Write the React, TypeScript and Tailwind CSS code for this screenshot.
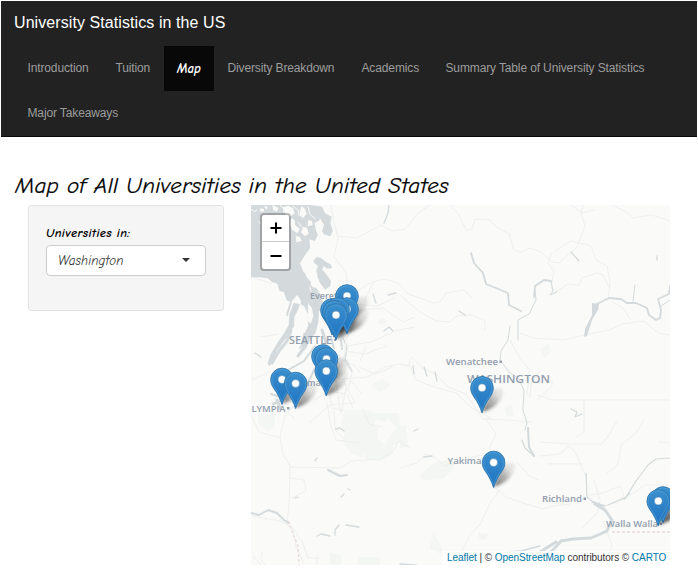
import React from "react";

const tabs = [
  { label: "Introduction", width: "w-[88px]" },
  { label: "Tuition", width: "w-[62px]" },
  { label: "Map", width: "w-[50px]", active: true },
  { label: "Diversity Breakdown", width: "w-[134px]" },
  { label: "Academics", width: "w-[84px]" },
  { label: "Summary Table of University Statistics", width: "w-[226px]" },
  { label: "Major Takeaways", width: "w-[118px]" },
];

const pins: [number, number][] = [
  [347, 296], [347, 309], [332, 310], [338, 309], [334, 312], [336, 315],
  [323, 356], [326.5, 359], [326.3, 371], [282, 379.5], [295.6, 383.5],
  [482, 387.8], [493.6, 462.5], [663, 498], [658.3, 501],
];

function Pin({ x, y }: { x: number; y: number }) {
  return (
    <g transform={`translate(${x} ${y})`}>
      <path
        d="M0 25C-1.5 20-4.8 13.5-8 9.2C-10.2 6.2-11.3 3.2-11.3 0A11.3 11.3 0 0 1 11.3 0C11.3 3.2 10.2 6.2 8 9.2C4.8 13.5 1.5 20 0 25Z"
        fill="url(#pinFill)"
        stroke="#2f77ad"
        strokeWidth=".9"
      />
      <path
        d="M0 22C-1.8 17-4.5 12.2-7.2 8.5C-9.2 5.7-10.2 3-10.2 0A10.2 10.2 0 0 1 10.2 0C10.2 3 9.2 5.7 7.2 8.5C4.5 12.2 1.8 17 0 22Z"
        fill="none"
        stroke="#5ba7dc"
        strokeOpacity=".55"
        strokeWidth=".9"
      />
      <circle r="4" fill="#fff" stroke="#2c73aa" strokeWidth=".5" />
    </g>
  );
}

function MapDrawing() {
  return (
    <svg className="block h-[360px] w-[419px]" viewBox="251 205 419 360">
      <defs>
        <linearGradient id="pinFill" x1="0" y1="0" x2="0" y2="1">
          <stop offset="0" stopColor="#3b8fcd" />
          <stop offset="1" stopColor="#1c72c2" />
        </linearGradient>
        <linearGradient id="shade" x1="0" y1="1" x2="1" y2="0">
          <stop offset="0" stopColor="#222" stopOpacity=".65" />
          <stop offset=".8" stopColor="#222" stopOpacity=".08" />
        </linearGradient>
        <filter id="soft" x="-40%" y="-40%" width="180%" height="180%">
          <feGaussianBlur stdDeviation="1.5" />
        </filter>
      </defs>
      <rect x="251" y="205" width="419" height="360" fill="#fafaf8" />

      {/* Forest and park areas */}
      <g fill="#f4f6f3">
        <path fillRule="evenodd" d="M343 414l6-4h19l6 3h25l1 12 6 1v14l-13 5v9l-12 7-15-1-1-9-2 7-12-5-9-12 3-8-4-9zM376 419l9 3 3-4 9 11-5 4-7 12-8-7 2-10-5-3z" />
        <path d="M420 475l14-12 18-4 1 10-10 10-21 1zM258 414h17v12l-8 5-9-8zM400 425l7 8 1 13-8 3zM330 552l11 3v10h-11zM358 557h22v8h-22zM540 349l8-5 4 7-8 7zM504 407l7-3 3 11-7 2z" />
        <path d="M371 385l12-6 8 6-11 7zM433 533l8 13 1 8-12-5zM478 533l10 1-2 5-6 1zM378 320l7-2 2 5-8 2z" />
      </g>

      {/* Puget Sound and the Strait of Juan de Fuca */}
      <g transform="translate(250 200) scale(.333333)">
        <path
          fill="#d4dadc"
          d="M3 15H182L204 24L215 46L207 62L194 69L197 88L204 106L194 123L178 118L181 143L163 168L151 191L162 211L170 231L183 246L178 266L190 285L193 312L207 336L205 367L197 398L181 420L164 451L152 437L159 407L166 374L162 345L150 329L153 302L142 285L123 306L110 301L102 277L88 272L82 251L66 246L53 235L28 232L3 232Z"
        />
        <path
          fill="#d4dadc"
          d="M182 15L216 20L225 39L245 50L241 70L249 94L240 109L221 103L216 94L222 75L211 56L195 41ZM190 168L211 173L230 187L243 194L246 204L232 206L221 198L217 209L230 224L243 242L241 258L226 269L211 251L203 232L199 213L203 197L191 187ZM178 249L188 262L199 264L211 283L218 304L214 328L197 344L188 324L192 301Z"
        />
        <g fill="#fafaf8">
          <path d="M181 139L193 143L204 154L206 163L195 177L181 185L177 199L190 214L197 231L190 240L174 226L160 215L150 190L158 178L172 171L180 156ZM184 235L202 243L213 259L208 266L193 258ZM151 312l13 8 12 28-2 31-10 21-8-13 3-19-10-18-2-22zM174 310l12 14 4 25-8 22-7-8-1-28z" />
          <path d="M99 22l15-5 15 7 5 16-13 10-15-8zM122 53l11 6 3 17 13 10-6 14-16-10-7-17zM154 19l9 5 7 16-10 15-11-9 2-17zM175 60l11 3 2 12-15 4zM159 80l12 3 5 18-11 8-12-12zM137 107l13 4 5 12-16 4zM28 30l7-6 8 6-5 7zM41 18l12 2-3 9zM67 15l18 8-4 12-12-5z" />
        </g>
        <path fill="none" stroke="#fafaf8" strokeWidth="3" d="M3 28l11 7 7-6M90 16l10 8 2 13M127 17l18 14 2 18M144 66l10 15M174 19l6 24 17 15M204 83l14 1M25 65l7 6" />
        <path fill="#d4dadc" d="M131 308L150 313L143 332L133 350L132 378L115 407L97 429L80 454L70 483L58 499L53 489L62 463L82 429L102 400L116 375L118 344Z" />
      </g>
      <g fill="none" stroke="#d4dadc" strokeLinejoin="round" strokeLinecap="round">
        <path strokeWidth="3" d="M291 331l-4 10-8 10-7 12M306 345l-8 11M322 330l4 12-4 13M306 380l-7 10-11 2M289 389l-5 10-11 5M277 400l3 8" />
        <path strokeWidth="2" d="M315 346l-11 15-16 9M324 349l7 9M331 338l3 10M280 397l-9-3M291 302l-4 13M307 339l-7 9M315 368l-8 17-13 5M283 376l6 12M341 340l1 9" />
        <path strokeWidth="1.3" d="M343 338l4 9-2 12 7 12M389 205l-1 8-4 10M255 353l6 4M384 331l5-4 4 4M376 303l-3-9M251 240l1-2" />
      </g>

      {/* Roads */}
      <g fill="none" stroke="#eef0ef" strokeWidth="1">
        <path d="M331 205l3 17 4 16-4 19 12 15 4 35 3 19-7 14-2 20 8 13-3 14-11 13M337 236l20 2 24-13 12 6 12-2 14-17 11-7M450 205l9 10 7 15 6-1 3-10 15 1 8 8 11 6 5 16 7 2 9-4 11 4 11 10 7 1 18-16 8-21-4-13 5-16" />
        <path d="M571 205l11 8 12-3M555 251l16-10 20 5 5 14 11 6 3 17-2 18M611 301l12 7 8 12M669 335l-11-2-14-12-22 3-13 6-25 5-20 5-31-2-13-5M552 252l-4 11 6 8-3 17 5 4 12-8 11 1 3-7 15-5 6 2 6 12M612 205l16 8 5 5 19-3 18 6" />
        <path d="M357 291l15-9 13-3 13 4 10 11 12 4 13 5 7-1 6-9 18-3 8 8M353 304l24 2 17-8M353 311l30-3 20 14 12-5M341 347l30-5 27-12 17-3M336 357l19 9 5 7M341 379l26-2 18-10 15-3 10 2 6 14 21 8 19 5 16 15 20 11" />
        <path d="M299 391l28-16 15 4 13 24-25 2-21 18M327 403l4 23 5 14 23 3M327 391l20 3 6 14M290 383l6 21-11 11-5 22 3 17 7 12-1 40-2 18M251 415l8 17 10 3 10 2M290 467l51 1 10-7 30-2 13-9 4-9 12 7M290 478l14 2 2 11-14 7M252 516l28 5 12 6 10 14 6 17" />
        <path d="M400 364l8 2 4-9 10 11 15 7 11 12 18 7 17 25 23 1 27 2M485 418l11 16-7 15M537 395l15 5h118M537 400l15-14v-6M584 400v32l-8 5M617 421l-8 14-7 9h-32l-30-2M644 420l-8 13-15 12-3 20-12 9M400 468l17-5 9-9 10 4 8 8 11-2 13-6 16-3 14 11 8 9M494 487l12 10 17 6 20 6 10-3 17-2M500 490l-10 13-9 20-11 12-8 16" />
        <path d="M540 456l20-2 9-8 6 6 11 24M548 464h34M594 480l6 20-2 12-16 16M603 507l24-9 18-13h25M590 495l13-2 17-7 4 10M603 521l9 24-5 20M670 443l-12-1M540 370l-9 14-1 14M517 462l12 14 10 4M286 521l7 10 3 15 8 18M308 558h12M317 555v10M253 556l8 9M262 552l-1 8 5 5M347 411l-15-3M363 409l6 15 13 3M334 410l1 20 8 8" />
        <path d="M510 340l11 20 9 10-3 25M400 295l20 17 16 9 14 1 6-6 17-1 12 6v9" />
        <path d="M350 380l12 14M322 380l16 14M336 380l4 32M347 384l-6 29M314 400l14-8 4 12M359 367l16 7 18-7M345 351l20 3 21-8M360 361l6-14M373 283l-9 18M337 281h15M289 401l11 7M282 407l13 12M255 278l17 6M260 337l19-3M252 380l19-9" />
      </g>

      {/* Rivers and lakes */}
      <g fill="none" stroke="#d4dadc" strokeLinecap="round" strokeLinejoin="round">
        <path strokeWidth="1.8" d="M471 253l3 10 9 10 3 11 10 4 12 5 1 12 12 6M534 297l1-11 9-6 7 1M595 305l8-4 6-3 12 1 6 4h9l11 5 2 7 7 5 4-2 1-8-3-11 11-5 1-8" />
        <path strokeWidth="1" d="M551 281l2 10-3 4 7-3M535 290l1 10-7 14-11 6v20M633 301l2-16M510 326l-2 14-7 11-1 9 9 12 9 6 6 12-1 20 4 13-2 7M661 306l9-6" />
        <path strokeWidth="2" d="M251 513l8 2 9-5 9 3 7 7 5 3M328 470l12 6 7-1M528 428l1 19 5 9" />
        <path strokeWidth="1.3" d="M295 498l3-1M317 536l4-2 9 2M335 535v-5l4-5M346 525l13 2M315 461l2-3M336 429l4-1 4 3M341 497l3-3M348 489l2 1M413 366l1 8M424 367l3 9M435 372l2 9M414 431l4-2M424 457l8-1M388 295l8-2M459 311l6 4M571 252l8 9M657 256v4" />
        <path strokeWidth="1.2" d="M522 440l3 8 9 8M586 473l1 24 5 4 11 5M608 505l18-8 10-16 12-16 8-6 13-1M624 499l6-6M571 409l6 3-2 5 7-3" />
        <path strokeWidth="3" d="M534 560l18-9 9-10 12-2 18-1 16-7 5-11-7-10-10-6M540 552l16-10" />
        <path strokeWidth="1.5" d="M400 564l16 1M507 552l14-1 19-5M592 502l13 4" />
      </g>
      <path d="M592 303l7 1-1 6-6 10-5 16-3 1 1-8 7-14z" fill="#d4dadc" />
      <path d="M612 532H670M288 521l5 13 5 12 1 19" fill="none" stroke="#ead9d9" strokeWidth="1.3" strokeDasharray="3 2" />

      <g fill="#929eae" fontFamily="'Open Sans', 'Noto Sans', sans-serif" fontWeight="600">
        <text x="310" y="299" fontSize="9" textLength="31" lengthAdjust="spacingAndGlyphs">Everett</text>
        <text x="289" y="344" fontSize="10" textLength="43" lengthAdjust="spacingAndGlyphs">SEATTLE</text>
        <text x="286" y="386" fontSize="9" textLength="35" lengthAdjust="spacingAndGlyphs">Tacoma</text>
        <text x="251.5" y="411.5" fontSize="9.5" textLength="34" lengthAdjust="spacingAndGlyphs">LYMPIA</text>
        <text x="446" y="365" fontSize="9" textLength="52" lengthAdjust="spacingAndGlyphs">Wenatchee</text>
        <text x="467" y="382.5" fontSize="11" textLength="83" lengthAdjust="spacingAndGlyphs">WASHINGTON</text>
        <text x="447.5" y="464" fontSize="9" textLength="34" lengthAdjust="spacingAndGlyphs">Yakima</text>
        <text x="542" y="502" fontSize="9" textLength="40" lengthAdjust="spacingAndGlyphs">Richland</text>
        <text x="606" y="527" fontSize="9" textLength="52" lengthAdjust="spacingAndGlyphs">Walla Walla</text>
        <path d="M334 339h2v2h-2zM287 407h2.5v2.5h-2.5zM499.5 360.5h2.5v2.5h-2.5zM583.5 497.5h2.5v2.5h-2.5zM660 523h2v2h-2z" />
      </g>

      {pins.map(([x, y], i) => (
        <path
          key={i}
          d="M0 24L8 5Q16-2 21 2Q22 10 13 18Q7 23 0 24Z"
          transform={`translate(${x} ${y})`}
          fill="url(#shade)"
          filter="url(#soft)"
        />
      ))}
      {pins.map(([x, y], i) => <Pin key={i} x={x} y={y} />)}
    </svg>
  );
}

const comic = "font-['Comic_Sans_MS','Comic_Neue',Lato,sans-serif] italic";

export default function App() {
  return (
    <div className="h-[570px] w-[698px] overflow-hidden bg-white pl-px pt-px font-['Liberation_Sans',Arial,sans-serif] text-xs text-black">
      <nav className="h-[136px] w-[696px] border-b border-[#080808] bg-[#222] pl-[13px]">
        <div className="h-[45px] whitespace-nowrap pt-[10px] text-[16px] leading-6 tracking-[0.08px] text-white">University Statistics in the US</div>
        <div className="flex flex-wrap">
          {tabs.map((tab) => (
            <a
              key={tab.label}
              className={`flex h-[45px] shrink-0 items-center whitespace-nowrap ${tab.width} ${
                tab.active
                  ? `justify-center bg-[#080808] pt-px text-[13px] font-bold text-white ${comic}`
                  : "pb-[2px] pl-[13.5px] text-[12px] tracking-[-0.13px] text-[#9d9d9d]"
              }`}
            >
              {tab.label}
            </a>
          ))}
        </div>
      </nav>
      <h1 className={`ml-[14px] mt-[34px] h-[34px] w-[480px] whitespace-nowrap text-[23px] leading-[30px] tracking-[0.2px] [-webkit-text-stroke:0.2px_black] ${comic}`}>
        Map of All Universities in the United States
      </h1>
      <main className="flex">
        <aside className="ml-[27px] h-[106px] w-[196px] shrink-0 rounded-[3px] border border-[#e3e3e3] bg-[#f5f5f5] px-[17px] pt-[18px]">
          <label className={`block h-[21px] whitespace-nowrap text-[12.5px] font-bold leading-[18px] tracking-[0.35px] ${comic}`}>Universities in:</label>
          <div className="flex h-[31px] w-[160px] items-center justify-between rounded-[4px] border border-[#ccc] bg-white pl-[11px] pr-[15px]">
            <span className={`text-[13px] tracking-[0.08px] text-[#333] ${comic}`}>Washington</span>
            <span className="mb-[2px] h-0 w-0 border-x-[4.5px] border-t-[4.5px] border-x-transparent border-t-[#333]" />
          </div>
        </aside>
        <section className="relative ml-[27px] h-[360px] w-[419px] shrink-0 overflow-hidden">
          <MapDrawing />
          <div className="absolute left-[9px] top-[8px] flex h-[58px] w-[31px] flex-col rounded-[4px] border-2 border-black/25 bg-white bg-clip-padding">
            <button className="flex h-[27px] items-center justify-center border-b border-[#ccc]" aria-label="Zoom in">
              <svg className="h-3 w-3" viewBox="0 0 12 12" stroke="#000" strokeWidth="2"><path d="M.5 6h11M6 .5v11" /></svg>
            </button>
            <button className="flex flex-1 items-center justify-center" aria-label="Zoom out">
              <svg className="h-3 w-3" viewBox="0 0 12 12" stroke="#000" strokeWidth="2"><path d="M.5 6h11" /></svg>
            </button>
          </div>
          <div className="absolute bottom-0 right-0 flex h-[14px] w-[228px] items-center whitespace-pre bg-white/80 pl-[5px] text-[10px] tracking-[-0.05px] text-[#333]">
            <a className="text-[#0078a8]">Leaflet</a> | © <a className="text-[#0078a8]">OpenStreetMap</a> contributors © <a className="text-[#0078a8]">CARTO</a>
          </div>
        </section>
      </main>
    </div>
  );
}
